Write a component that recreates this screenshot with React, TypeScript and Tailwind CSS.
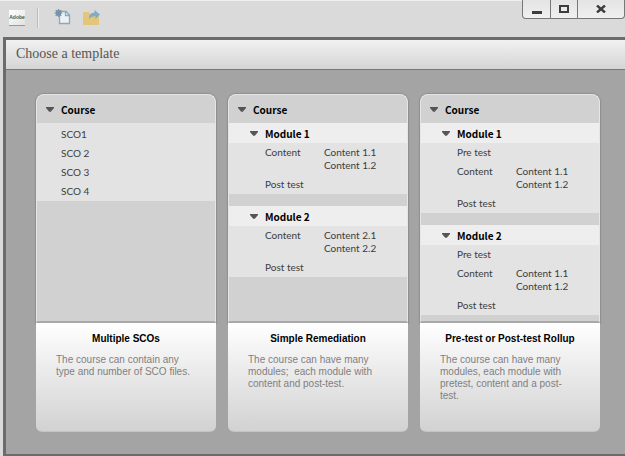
import { useState, type ReactNode } from "react";
import clsx from "clsx";

type Row = { label: string; items?: string[] };
type Module = { title: string; rows: Row[] };
type Template = {
  name: string;
  description: string;
  rows?: Row[];
  modules?: Module[];
};

const TEMPLATES: Template[] = [
  {
    name: "Multiple SCOs",
    description: "The course can contain any type and number of SCO files.",
    rows: [{ label: "SCO1" }, { label: "SCO 2" }, { label: "SCO 3" }, { label: "SCO 4" }],
  },
  {
    name: "Simple Remediation",
    description: "The course can have many modules;  each module with content and post-test.",
    modules: [
      {
        title: "Module 1",
        rows: [{ label: "Content", items: ["Content 1.1", "Content 1.2"] }, { label: "Post test" }],
      },
      {
        title: "Module 2",
        rows: [{ label: "Content", items: ["Content 2.1", "Content 2.2"] }, { label: "Post test" }],
      },
    ],
  },
  {
    name: "Pre-test or Post-test Rollup",
    description: "The course can have many modules, each module with pretest, content and a post-test.",
    modules: [
      {
        title: "Module 1",
        rows: [
          { label: "Pre test" },
          { label: "Content", items: ["Content 1.1", "Content 1.2"] },
          { label: "Post test" },
        ],
      },
      {
        title: "Module 2",
        rows: [
          { label: "Pre test" },
          { label: "Content", items: ["Content 1.1", "Content 1.2"] },
          { label: "Post test" },
        ],
      },
    ],
  },
];

function Disclosure({
  title,
  className,
  children,
}: {
  title: string;
  className: string;
  children: ReactNode;
}) {
  const [open, setOpen] = useState(true);

  return (
    <>
      <button
        type="button"
        aria-expanded={open}
        onClick={() => setOpen(!open)}
        className={clsx(
          "flex w-full items-center text-left font-['Noto_Sans_CJK_SC','Open_Sans',sans-serif] font-bold text-black",
          className,
        )}
      >
        <svg
          aria-hidden
          width="8"
          height="5"
          viewBox="0 0 8 5"
          className={clsx("shrink-0", !open && "-rotate-90")}
        >
          <path d="M0 0h8v1L4.800 4.800H3.200L0 1z" fill="#555" />
        </svg>
        {title}
      </button>
      {open && children}
    </>
  );
}

function Rows({ rows, className }: { rows: Row[]; className: string }) {
  return (
    <ul className={clsx("flex flex-col gap-1.5 bg-[#e3e3e3] pb-[3px] text-[#3c3c3c]", className)}>
      {rows.map((row) => (
        <li key={row.label} className="flex">
          <span className="w-[59px] shrink-0">{row.label}</span>
          {row.items && (
            <ul>
              {row.items.map((item) => (
                <li key={item}>{item}</li>
              ))}
            </ul>
          )}
        </li>
      ))}
    </ul>
  );
}

function TemplateCard({ template }: { template: Template }) {
  return (
    <article className="flex flex-col">
      <div className="min-h-[229px] rounded-t-lg border-x border-t border-b-2 border-x-[#e6e6e6] border-t-[#e6e6e6] border-b-[#a8a8a8] bg-[#d1d1d1] font-[Lato,'Open_Sans',sans-serif] text-[10px] leading-[13px] shadow-[0_0_1px_1px_#8f8f8f]">
        <Disclosure title="Course" className="h-7 gap-[7px] pl-[9px]">
          {template.rows && <Rows rows={template.rows} className="pt-[5px] pl-6" />}
          {template.modules && (
            <div className="flex flex-col gap-3">
              {template.modules.map((mod) => (
                <section key={mod.title}>
                  <Disclosure title={mod.title} className="h-5 gap-[7px] bg-[#eee] pl-[21px]">
                    <Rows rows={mod.rows} className="pt-[3px] pl-9" />
                  </Disclosure>
                </section>
              ))}
            </div>
          )}
        </Disclosure>
      </div>
      <div className="relative min-h-[109px] flex-1 rounded-b-md border-b border-[#c4c4c4] bg-linear-to-b from-white to-[#d2d2d2] pt-2.5 font-['Liberation_Sans',Arial,sans-serif] leading-3">
        <h2 className="text-center text-[10px] font-bold text-black">{template.name}</h2>
        <p className="mt-[9px] pr-6 pl-5 text-[10px] whitespace-pre-wrap text-[#808080]">
          {template.description}
        </p>
      </div>
    </article>
  );
}

function WindowControls() {
  const base =
    "grid place-items-center border-r border-b border-[#777] bg-linear-to-b from-[#e4e4e4] to-[#f0f0f0]";
  return (
    <div className="flex h-[19px]">
      <button type="button" aria-label="Minimize" className={clsx(base, "w-[29px] rounded-bl border-l")}>
        <svg width="12" height="10" viewBox="0 0 12 10" aria-hidden>
          <path d="M1 7h10v3H1z" fill="#3d3d3d" />
        </svg>
      </button>
      <button type="button" aria-label="Maximize" className={clsx(base, "w-[27px]")}>
        <svg width="10" height="8" viewBox="0 0 10 8" aria-hidden>
          <path d="M1 1h8v6H1z" fill="none" stroke="#3d3d3d" strokeWidth="2" />
        </svg>
      </button>
      <button type="button" aria-label="Close" className={clsx(base, "w-[47px] rounded-br")}>
        <svg width="10" height="8" viewBox="0 0 10 8" aria-hidden>
          <path d="M1 0.5l8 7M9 0.5l-8 7" stroke="#3d3d3d" strokeWidth="2.4" />
        </svg>
      </button>
    </div>
  );
}

function Toolbar() {
  return (
    <div className="flex items-center pt-[7px] pl-[9px]">
      <span className="grid h-4 w-4 place-items-center border-b border-[#999] bg-linear-to-br from-white to-[#e2e2e2] font-['Liberation_Sans',Arial,sans-serif] text-[5px] leading-none font-bold text-[#49584f]">
        Adobe
      </span>
      <span className="ml-3 h-5 w-0.5 border-r border-l border-r-[#eee] border-l-[#bbb]" />
      <button type="button" aria-label="New course" className="ml-[15px]">
        <svg width="18" height="18" viewBox="0 0 18 18" aria-hidden>
          <path d="M5.500 2.500h6.500l3.500 3.500v8.500h-10z" fill="#eef0f1" stroke="#82aac9" strokeWidth="1.3" />
          <path d="M11.500 2.500v4h4" fill="none" stroke="#82aac9" strokeWidth="1.3" />
          <path
            d="M4.500 0v8M.5 4h8M1.700 1.200l5.600 5.600M7.300 1.200L1.700 6.800"
            stroke="#7893a8"
            strokeWidth="1.2"
          />
          <circle cx="4.5" cy="4" r="2.9" fill="#7893a8" />
        </svg>
      </button>
      <button type="button" aria-label="Open course" className="ml-[11px]">
        <svg width="18" height="18" viewBox="0 0 18 18" aria-hidden>
          <path d="M0 3h6l1 2h9v11H0z" fill="#e1c67b" />
          <path
            d="M6 10C6 5.500 8 3.600 11.500 3.400V1l5.500 4.500-4.500 4.500V7.300C9.500 7 8 8 6 10z"
            fill="#82aac9"
          />
        </svg>
      </button>
    </div>
  );
}

export default function App() {
  return (
    <div className="flex min-h-screen flex-col bg-[#dadada]">
      <header className="flex h-[37px] items-start justify-between border-t border-[#efefef]">
        <Toolbar />
        <div className="-mt-px">
          <WindowControls />
        </div>
      </header>
      <main className="ml-[3px] flex flex-1 flex-col border-t-3 border-b-2 border-l-3 border-[#6c6a6a] bg-[#a4a4a4]">
        <h1 className="h-[30px] border-b border-[#777] bg-linear-to-b from-[#f1f1f1] to-[#d5d5d5] pl-2.5 font-['Liberation_Serif','Times_New_Roman',serif] text-[14px] leading-7 text-[#555]">
          Choose a template
        </h1>
        <div className="grid grid-cols-3 gap-3 pt-6 pr-[25px] pb-[22px] pl-[30px]">
          {TEMPLATES.map((template) => (
            <TemplateCard key={template.name} template={template} />
          ))}
        </div>
      </main>
    </div>
  );
}
